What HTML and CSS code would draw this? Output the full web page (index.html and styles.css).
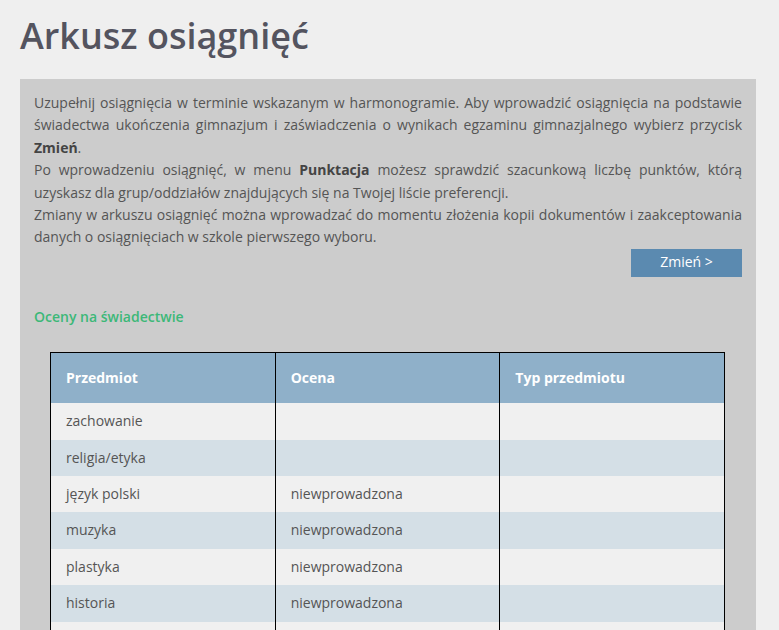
FILE: index.html
```html
<!DOCTYPE html>
<html lang="pl">
<head>
<meta charset="utf-8">
<title>Arkusz osiągnięć</title>
<link rel="stylesheet" href="styles.css">
</head>
<body>
<div class="page">
  <h1 class="title">Arkusz osiągnięć</h1>
  <div class="panel">
    <p class="info">Uzupełnij osiągnięcia w terminie wskazanym w harmonogramie. Aby wprowadzić osiągnięcia na podstawie świadectwa ukończenia gimnazjum i zaświadczenia o wynikach egzaminu gimnazjalnego wybierz przycisk <b>Zmień</b>.</p>
    <p class="info">Po wprowadzeniu osiągnięć, w menu <b>Punktacja</b> możesz sprawdzić szacunkową liczbę punktów, którą uzyskasz dla grup/oddziałów znajdujących się na Twojej liście preferencji.</p>
    <p class="info">Zmiany w arkuszu osiągnięć można wprowadzać do momentu złożenia kopii dokumentów i zaakceptowania danych o osiągnięciach w szkole pierwszego wyboru.</p>
    <div class="actions"><a class="btn" href="#">Zmień &gt;</a></div>
    <h2 class="section">Oceny na świadectwie</h2>
    <table class="grades">
      <thead>
        <tr><th>Przedmiot</th><th>Ocena</th><th>Typ przedmiotu</th></tr>
      </thead>
      <tbody>
        <tr><td>zachowanie</td><td></td><td></td></tr>
        <tr><td>religia/etyka</td><td></td><td></td></tr>
        <tr><td>język polski</td><td>niewprowadzona</td><td></td></tr>
        <tr><td>muzyka</td><td>niewprowadzona</td><td></td></tr>
        <tr><td>plastyka</td><td>niewprowadzona</td><td></td></tr>
        <tr><td>historia</td><td>niewprowadzona</td><td></td></tr>
        <tr><td>wiedza o społeczeństwie</td><td>niewprowadzona</td><td></td></tr>
      </tbody>
    </table>
  </div>
</div>
</body>
</html>
```
FILE: styles.css
```css
html, body {
  margin: 0;
  padding: 0;
  background: #efefef;
}
body {
  font-family: "Open Sans", "Liberation Sans", sans-serif;
  font-size: 14px;
  line-height: 22.4px;
  color: #555555;
}
.page {
  padding: 0 23px 0 20px;
}
.title {
  margin: 0;
  padding-top: 10px;
  height: 79px;
  box-sizing: border-box;
  font-size: 36px;
  line-height: 52px;
  font-weight: 600;
  color: #54545f;
}
.panel {
  background: #cccccc;
  padding: 13px 14px 40px;
}
.info {
  margin: 0;
  text-align: justify;
}
.info b {
  font-weight: 700;
  color: #444444;
}
.actions {
  display: flex;
  justify-content: flex-end;
}
.btn {
  display: block;
  width: 111px;
  height: 28px;
  line-height: 26px;
  text-align: center;
  background: #5b8ab0;
  color: #ffffff;
  text-decoration: none;
  font-size: 14px;
}
.section {
  margin: 29px 0 24px;
  font-size: 14px;
  line-height: 22px;
  font-weight: 600;
  color: #3cb878;
}
.grades {
  margin: 0 17px 0 16px;
  width: 675px;
  border-collapse: collapse;
  border: 1px solid #000000;
  table-layout: fixed;
}
.grades th, .grades td {
  border-left: 1px solid #000000;
  text-align: left;
  padding: 7px 15px;
}
.grades th {
  background: #8fb0c9;
  color: #ffffff;
  font-weight: 700;
  padding: 14px 15px;
}
.grades tbody tr:nth-child(odd) td {
  background: #f0f0f0;
}
.grades tbody tr:nth-child(even) td {
  background: #d4dfe6;
}
```
